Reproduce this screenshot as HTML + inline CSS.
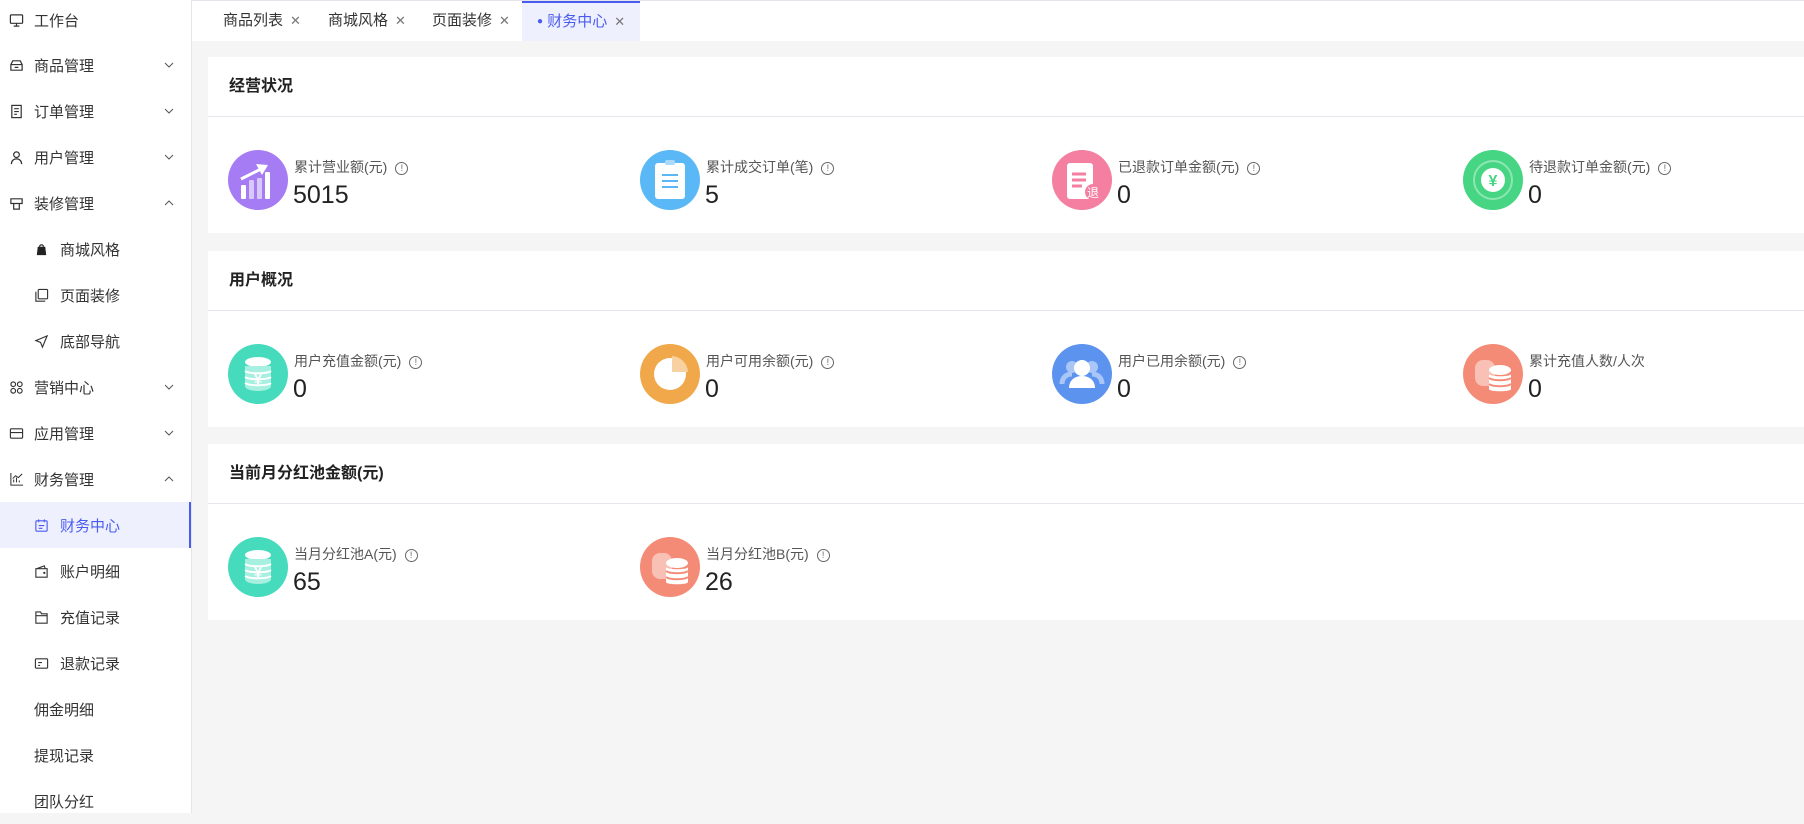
<!DOCTYPE html>
<html><head><meta charset="utf-8"><style>
*{margin:0;padding:0;box-sizing:border-box}
body{width:1804px;height:813px;overflow:hidden;background:#f5f5f5;font-family:"Liberation Sans","Noto Sans CJK SC",sans-serif;color:#333;position:relative}
.side{position:absolute;left:0;top:0;width:192px;height:813px;background:#fff;border-right:1px solid #e6e6e6}
.mi{position:absolute;left:0;width:191px;height:46px;font-size:15px;color:#333;display:flex;align-items:center}
.mi .ic{position:absolute;left:9px;width:15px;height:15px}
.mi .t{position:absolute;left:34px}
.mi.sub .ic{left:34px}
.mi.sub .t{left:60px}
.mi .ch{position:absolute;left:164px;width:10px;height:6px}
.mi.act{background:#eef0fd;color:#4a5cf0;border-right:2px solid #4a5cf0}
.tabs{position:absolute;left:192px;top:0;right:0;height:41px;background:#fff;border-top:1px solid #e2e4ea}
.tab{position:absolute;top:0;height:40px;font-size:15px;color:#333;line-height:40px}
.tab .x{font-size:13px;color:#777;margin-left:7px}
.tab.act{background:#eef0fd;color:#4a5cf0;border-top:2px solid #4a5cf0;line-height:38px}
.card{position:absolute;left:208px;right:0;background:#fff}
.card .hd{height:60px;border-bottom:1px solid #e6e7ec;font-size:16px;font-weight:bold;color:#222;padding-left:21px;line-height:60px}
.st{position:absolute;top:93px}
.st .c{position:absolute;left:0;top:0;width:60px;height:60px;border-radius:50%}
.st .l{position:absolute;left:66px;top:7px;font-size:14px;color:#555;white-space:nowrap}
.st .v{position:absolute;left:65px;top:31px;font-size:25px;color:#222}
.info{display:inline-block;width:13px;height:13px;border:1px solid #666;border-radius:50%;font-size:9px;line-height:11px;text-align:center;margin-left:8px;vertical-align:1px;color:#666}
</style></head><body>
<div class="side">
<div class="mi" style="top:-3px"><svg class="ic" viewBox="0 0 16 16"><rect x="1.5" y="2" width="13" height="9" rx="1" fill="none" stroke="#333" stroke-width="1.3"/><path d="M8 11v3M5 14h6" stroke="#333" stroke-width="1.3"/></svg><span class="t">工作台</span></div>
<div class="mi" style="top:42px"><svg class="ic" viewBox="0 0 16 16"><path d="M2 7h12v6H2zM2 7l2-4h8l2 4M6 10h4" fill="none" stroke="#333" stroke-width="1.3"/></svg><span class="t">商品管理</span><svg class="ch" viewBox="0 0 10 6"><path d="M1 1l4 4 4-4" fill="none" stroke="#555"/></svg></div>
<div class="mi" style="top:88px"><svg class="ic" viewBox="0 0 16 16"><rect x="3" y="1.5" width="10" height="13" fill="none" stroke="#333" stroke-width="1.3"/><path d="M5.5 5h5M5.5 8h5M5.5 11h3" stroke="#333" stroke-width="1.2"/></svg><span class="t">订单管理</span><svg class="ch" viewBox="0 0 10 6"><path d="M1 1l4 4 4-4" fill="none" stroke="#555"/></svg></div>
<div class="mi" style="top:134px"><svg class="ic" viewBox="0 0 16 16"><circle cx="8" cy="5" r="3" fill="none" stroke="#333" stroke-width="1.3"/><path d="M2.5 15c0-3.5 2.5-5.5 5.5-5.5s5.5 2 5.5 5.5" fill="none" stroke="#333" stroke-width="1.3"/></svg><span class="t">用户管理</span><svg class="ch" viewBox="0 0 10 6"><path d="M1 1l4 4 4-4" fill="none" stroke="#555"/></svg></div>
<div class="mi" style="top:180px"><svg class="ic" viewBox="0 0 16 16"><path d="M2 3h12v5H2zM5 8v6h6V8" fill="none" stroke="#333" stroke-width="1.3"/></svg><span class="t">装修管理</span><svg class="ch" viewBox="0 0 10 6"><path d="M1 5l4-4 4 4" fill="none" stroke="#555"/></svg></div>
<div class="mi sub" style="top:226px"><svg class="ic" viewBox="0 0 16 16"><path d="M4 5h8l1 9H3z" fill="#222"/><path d="M6 5a2 2 0 014 0" fill="none" stroke="#222" stroke-width="1.3"/></svg><span class="t">商城风格</span></div>
<div class="mi sub" style="top:272px"><svg class="ic" viewBox="0 0 16 16"><rect x="4.5" y="1.5" width="10" height="10" rx="1" fill="none" stroke="#333" stroke-width="1.2"/><path d="M2 4v10h10" fill="none" stroke="#333" stroke-width="1.2"/></svg><span class="t">页面装修</span></div>
<div class="mi sub" style="top:318px"><svg class="ic" viewBox="0 0 16 16"><path d="M14 2L2 7l5 2 2 5z" fill="none" stroke="#333" stroke-width="1.2"/></svg><span class="t">底部导航</span></div>
<div class="mi" style="top:364px"><svg class="ic" viewBox="0 0 16 16"><circle cx="4.5" cy="4.5" r="2.5" fill="none" stroke="#333" stroke-width="1.2"/><circle cx="11.5" cy="4.5" r="2.5" fill="none" stroke="#333" stroke-width="1.2"/><circle cx="4.5" cy="11.5" r="2.5" fill="none" stroke="#333" stroke-width="1.2"/><circle cx="11.5" cy="11.5" r="2.5" fill="none" stroke="#333" stroke-width="1.2"/></svg><span class="t">营销中心</span><svg class="ch" viewBox="0 0 10 6"><path d="M1 1l4 4 4-4" fill="none" stroke="#555"/></svg></div>
<div class="mi" style="top:410px"><svg class="ic" viewBox="0 0 16 16"><rect x="1.5" y="3" width="13" height="10" rx="1" fill="none" stroke="#333" stroke-width="1.2"/><path d="M1.5 7h13" stroke="#333" stroke-width="1.2"/></svg><span class="t">应用管理</span><svg class="ch" viewBox="0 0 10 6"><path d="M1 1l4 4 4-4" fill="none" stroke="#555"/></svg></div>
<div class="mi" style="top:456px"><svg class="ic" viewBox="0 0 16 16"><path d="M2 1v13h13M5 11V8M8 11V6M11 11V9M4 7l3-3 3 2 4-4" fill="none" stroke="#333" stroke-width="1.1"/></svg><span class="t">财务管理</span><svg class="ch" viewBox="0 0 10 6"><path d="M1 5l4-4 4 4" fill="none" stroke="#555"/></svg></div>
<div class="mi sub act" style="top:502px"><svg class="ic" viewBox="0 0 16 16"><rect x="2" y="3" width="12" height="11" rx="1" fill="none" stroke="#4a5cf0" stroke-width="1.2"/><path d="M5 1.5v3M11 1.5v3M5 8h6M5 11h4" stroke="#4a5cf0" stroke-width="1.2"/></svg><span class="t">财务中心</span></div>
<div class="mi sub" style="top:548px"><svg class="ic" viewBox="0 0 16 16"><path d="M2 5h12v9H2zM3 5l8-3 1 3" fill="none" stroke="#333" stroke-width="1.2"/><circle cx="11" cy="9.5" r="1.2" fill="#333"/></svg><span class="t">账户明细</span></div>
<div class="mi sub" style="top:594px"><svg class="ic" viewBox="0 0 16 16"><path d="M2 2h5l1 2h6v10H2zM2 6h12" fill="none" stroke="#333" stroke-width="1.2"/></svg><span class="t">充值记录</span></div>
<div class="mi sub" style="top:640px"><svg class="ic" viewBox="0 0 16 16"><rect x="1.5" y="3" width="13" height="10" rx="1" fill="none" stroke="#333" stroke-width="1.2"/><path d="M4.5 7h4M4.5 10h2" stroke="#333" stroke-width="1.2"/></svg><span class="t">退款记录</span></div>
<div class="mi" style="top:686px"><span class="t">佣金明细</span></div>
<div class="mi" style="top:732px"><span class="t">提现记录</span></div>
<div class="mi" style="top:778px"><span class="t">团队分红</span></div>
</div>
<div class="tabs">
<div class="tab" style="left:31px">商品列表<span class="x">✕</span></div>
<div class="tab" style="left:136px">商城风格<span class="x">✕</span></div>
<div class="tab" style="left:240px">页面装修<span class="x">✕</span></div>
<div class="tab act" style="left:330px;width:118px;padding-left:15px"><span style="font-size:10px;vertical-align:2px">●</span> 财务中心<span class="x">✕</span></div>
</div>

<div class="card" style="top:57px;height:176px"><div class="hd">经营状况</div>
<div class="st" style="left:20px"><div class="c" style="background:#a57cf3"><svg width="60" height="60" viewBox="0 0 60 60"><rect x="13" y="35" width="5" height="14" rx="1" fill="#fff"/><rect x="21" y="30" width="5" height="19" rx="1" fill="#d9c9fb"/><rect x="29" y="28" width="5" height="21" rx="1" fill="#d9c9fb"/><rect x="37" y="22" width="5" height="27" rx="1" fill="#fff"/><path d="M13 29l20-10" stroke="#fff" stroke-width="3"/><path d="M28 14l12 1-6 10z" fill="#fff"/></svg></div><div class="l">累计营业额(元)<span class="info">!</span></div><div class="v">5015</div></div>
<div class="st" style="left:432px"><div class="c" style="background:#5ab8f6"><svg width="60" height="60" viewBox="0 0 60 60"><rect x="15" y="13" width="30" height="36" rx="3" fill="#fff"/><rect x="25" y="10" width="10" height="5" rx="2" fill="#a9d9fb"/><path d="M22 25h16M22 31h16M22 37h16" stroke="#5ab8f6" stroke-width="2"/></svg></div><div class="l">累计成交订单(笔)<span class="info">!</span></div><div class="v">5</div></div>
<div class="st" style="left:844px"><div class="c" style="background:#f47fa1"><svg width="60" height="60" viewBox="0 0 60 60"><rect x="15" y="13" width="26" height="36" rx="3" fill="#fff"/><path d="M20 24h14M20 30h14M20 36h10" stroke="#f47fa1" stroke-width="3"/><circle cx="41" cy="42" r="8" fill="#f47fa1"/><text x="41" y="47" font-size="12" fill="#fff" text-anchor="middle" font-family="Noto Sans CJK SC">退</text></svg></div><div class="l">已退款订单金额(元)<span class="info">!</span></div><div class="v">0</div></div>
<div class="st" style="left:1255px"><div class="c" style="background:#45d583"><svg width="60" height="60" viewBox="0 0 60 60"><circle cx="30" cy="30" r="19" fill="none" stroke="#8ee6b3" stroke-width="2"/><circle cx="30" cy="30" r="12" fill="#fff"/><text x="30" y="36" font-size="16" font-weight="bold" fill="#45d583" text-anchor="middle">¥</text></svg></div><div class="l">待退款订单金额(元)<span class="info">!</span></div><div class="v">0</div></div>
</div>

<div class="card" style="top:251px;height:176px"><div class="hd">用户概况</div>
<div class="st" style="left:20px"><div class="c" style="background:#45dbbc"><svg width="60" height="60" viewBox="0 0 60 60"><ellipse cx="30" cy="18" rx="13" ry="5" fill="#fff"/><path d="M17 22h26v20c0 3-6 5-13 5s-13-2-13-5z" fill="#a7efe0"/><path d="M17 27c4 3 22 3 26 0M17 33c4 3 22 3 26 0M17 39c4 3 22 3 26 0" stroke="#fff" stroke-width="2" fill="none"/><text x="30" y="40" font-size="15" font-weight="bold" fill="#fff" text-anchor="middle">¥</text></svg></div><div class="l">用户充值金额(元)<span class="info">!</span></div><div class="v">0</div></div>
<div class="st" style="left:432px"><div class="c" style="background:#f0a84a"><svg width="60" height="60" viewBox="0 0 60 60"><circle cx="30" cy="30" r="16" fill="#fff"/><path d="M32 12a17 17 0 0116 16H32z" fill="#f7d2a0"/></svg></div><div class="l">用户可用余额(元)<span class="info">!</span></div><div class="v">0</div></div>
<div class="st" style="left:844px"><div class="c" style="background:#5b93ef"><svg width="60" height="60" viewBox="0 0 60 60"><circle cx="20" cy="23" r="6" fill="#a9c6f7"/><circle cx="40" cy="23" r="6" fill="#a9c6f7"/><path d="M10 40c0-6 4-10 10-10M50 40c0-6-4-10-10-10" stroke="#a9c6f7" stroke-width="5" fill="none"/><circle cx="30" cy="24" r="8" fill="#fff"/><path d="M17 44c0-8 6-12 13-12s13 4 13 12z" fill="#fff"/></svg></div><div class="l">用户已用余额(元)<span class="info">!</span></div><div class="v">0</div></div>
<div class="st" style="left:1255px"><div class="c" style="background:#f48b77"><svg width="60" height="60" viewBox="0 0 60 60"><rect x="12" y="16" width="20" height="26" rx="8" fill="#f9c1b6"/><ellipse cx="37" cy="26" rx="11" ry="5" fill="#fff"/><path d="M26 30c0 3 22 3 22 0v15c0 3-22 3-22 0z" fill="#fff"/><path d="M26 34c4 3 18 3 22 0M26 40c4 3 18 3 22 0" stroke="#f48b77" stroke-width="2" fill="none"/></svg></div><div class="l">累计充值人数/人次</div><div class="v">0</div></div>
</div>

<div class="card" style="top:444px;height:176px"><div class="hd">当前月分红池金额(元)</div>
<div class="st" style="left:20px"><div class="c" style="background:#45dbbc"><svg width="60" height="60" viewBox="0 0 60 60"><ellipse cx="30" cy="18" rx="13" ry="5" fill="#fff"/><path d="M17 22h26v20c0 3-6 5-13 5s-13-2-13-5z" fill="#a7efe0"/><path d="M17 27c4 3 22 3 26 0M17 33c4 3 22 3 26 0M17 39c4 3 22 3 26 0" stroke="#fff" stroke-width="2" fill="none"/><text x="30" y="40" font-size="15" font-weight="bold" fill="#fff" text-anchor="middle">¥</text></svg></div><div class="l">当月分红池A(元)<span class="info">!</span></div><div class="v">65</div></div>
<div class="st" style="left:432px"><div class="c" style="background:#f48b77"><svg width="60" height="60" viewBox="0 0 60 60"><rect x="12" y="16" width="20" height="26" rx="8" fill="#f9c1b6"/><ellipse cx="37" cy="26" rx="11" ry="5" fill="#fff"/><path d="M26 30c0 3 22 3 22 0v15c0 3-22 3-22 0z" fill="#fff"/><path d="M26 34c4 3 18 3 22 0M26 40c4 3 18 3 22 0" stroke="#f48b77" stroke-width="2" fill="none"/></svg></div><div class="l">当月分红池B(元)<span class="info">!</span></div><div class="v">26</div></div>
</div>
</body></html>
